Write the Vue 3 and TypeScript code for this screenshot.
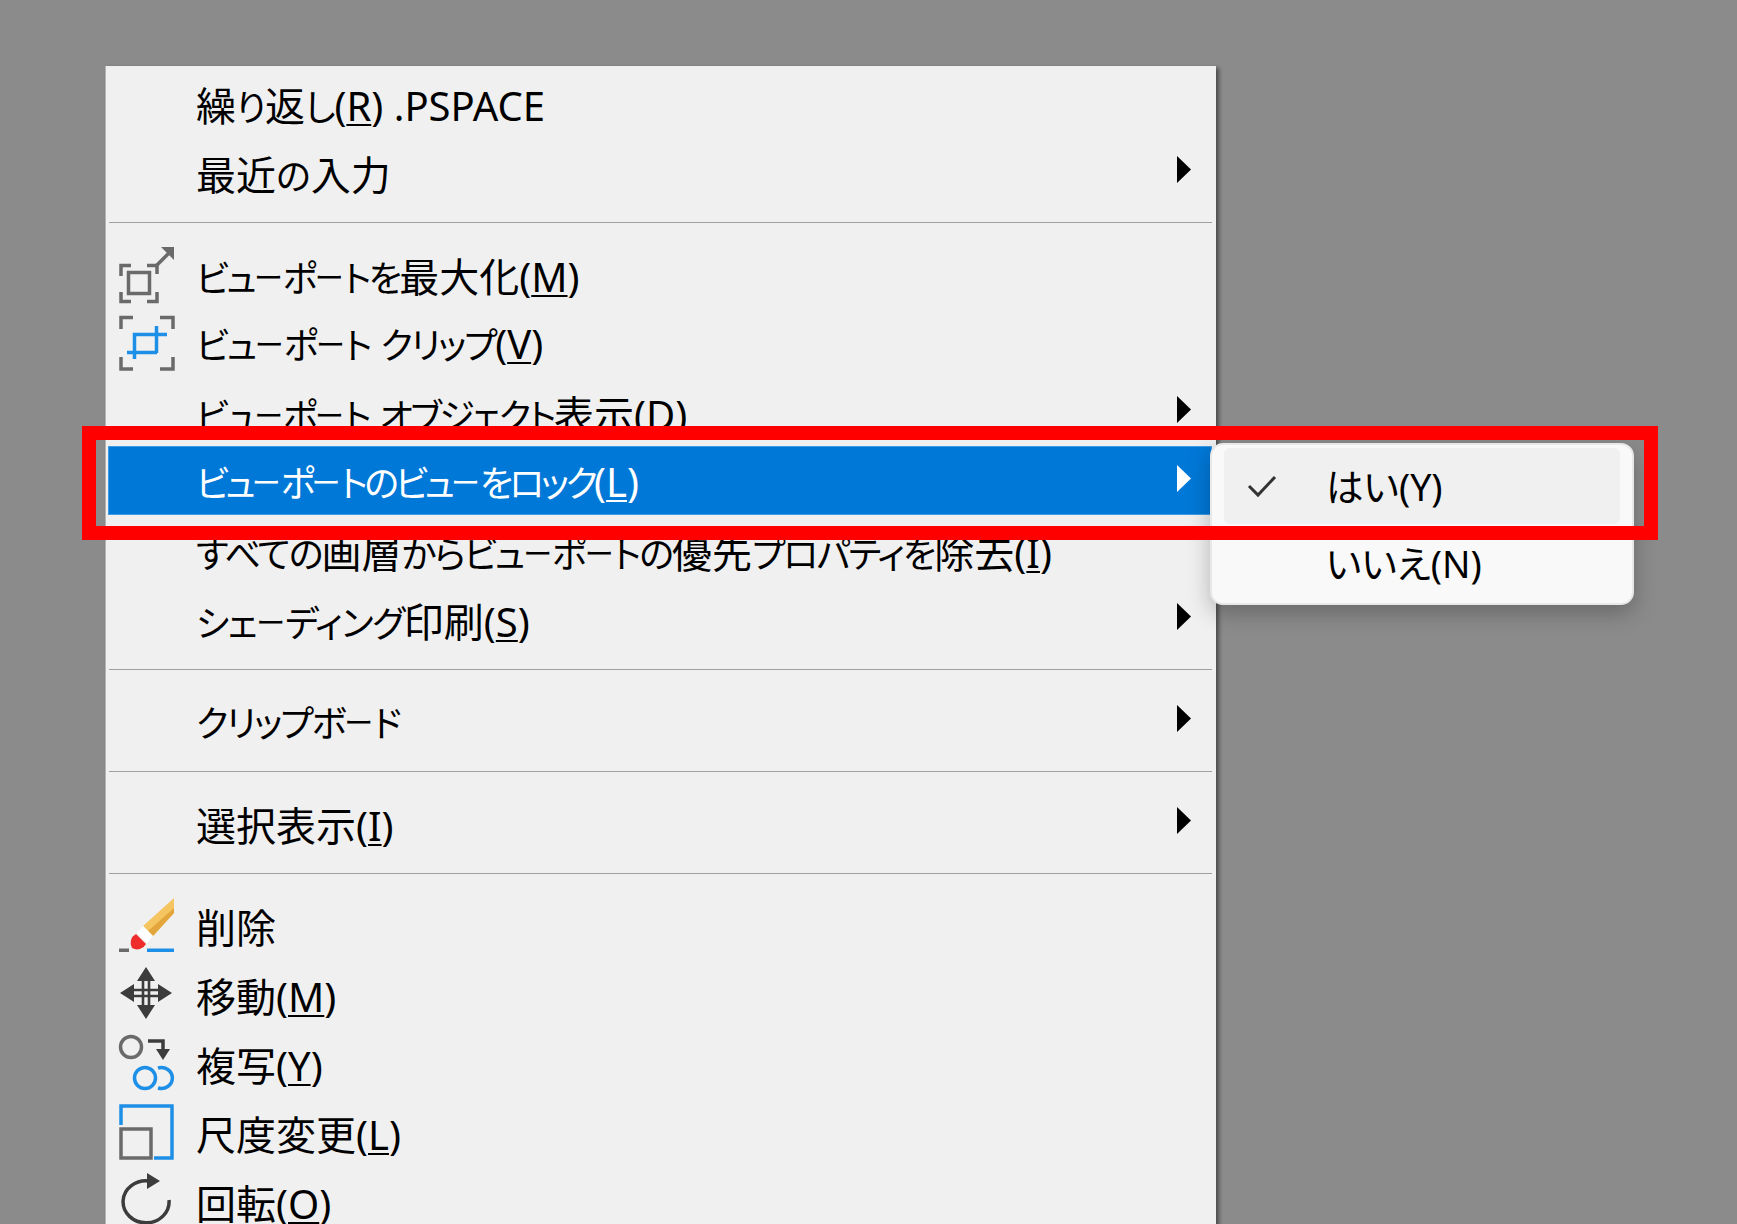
<template>
  <div class="page">
    <div class="menu">
      <template v-for="(group, g) in groups" :key="g">
        <div v-if="g > 0" class="sep"><i></i></div>
        <div
          v-for="row in group"
          :key="row.label"
          class="row"
          :class="{ active: row.active }"
        >
          <span class="icon">
            <svg v-if="row.icon === 'maximize'" viewBox="0 0 56 56" width="56" height="56" fill="none" stroke="#6a6a6a" stroke-width="3.5">
              <path d="M2 30V19.5H12M28 19.5H38V28M2 46V55.5H12M28 55.5H38V46" />
              <rect x="9.5" y="26.5" width="21" height="21" />
              <path d="M37 20L52 5" />
              <path d="M42 1H55V14Z" fill="#6a6a6a" stroke="none" />
            </svg>
            <svg v-else-if="row.icon === 'clip'" viewBox="0 0 56 56" width="56" height="56" fill="none" stroke="#6a6a6a" stroke-width="3.5">
              <path d="M14 2.5H2V14M41 2.5H54V14M2 42V54H14M41 54H54V42" />
              <path d="M15.5 44V19.5H48M8 37.5H38M37.5 11V38" stroke="#1e8fe6" />
            </svg>
            <svg v-else-if="row.icon === 'erase'" viewBox="0 0 56 56" width="56" height="56">
              <path d="M24 29L55 1V16L34 39Z" fill="#f5c562" />
              <path d="M29 34L55 11V16L34 39Z" fill="#e2a63c" />
              <path d="M24 29L34 39L28 46L18 36Z" fill="#fff" />
              <path d="M17 37L27 47A10 10 0 0 1 13 51A10 10 0 0 1 17 37Z" fill="#ee2c2c" />
              <rect x="0" y="51.5" width="10" height="3.5" fill="#6a6a6a" />
              <rect x="28" y="51.5" width="27" height="3.5" fill="#1e8fe6" />
            </svg>
            <svg v-else-if="row.icon === 'move'" viewBox="0 0 56 56" width="56" height="56" fill="#3c3c3c">
              <path d="M27 1L36 15H18ZM27 53L18 39H36ZM1 27L15 18V36ZM53 27L39 36V18Z" />
              <path d="M24 14V40M30 14V40M14 24H40M14 30H40" fill="none" stroke="#3c3c3c" stroke-width="2.6" />
            </svg>
            <svg v-else-if="row.icon === 'copy'" viewBox="0 0 56 56" width="56" height="56" fill="none" stroke-width="3.5">
              <circle cx="12" cy="12" r="10.5" stroke="#6a6a6a" />
              <path d="M29 6H44V15" stroke="#3c3c3c" />
              <path d="M37 14H51L44 25Z" fill="#3c3c3c" />
              <circle cx="26" cy="43" r="10.5" stroke="#1e8fe6" />
              <path d="M39 33A11 10.5 0 1 1 39 53" stroke="#1e8fe6" />
            </svg>
            <svg v-else-if="row.icon === 'scale'" viewBox="0 0 56 56" width="56" height="56" fill="none" stroke-width="3.5">
              <path d="M2 21V2H53V54H35" stroke="#1e8fe6" />
              <rect x="2" y="25" width="30" height="29" stroke="#6a6a6a" />
            </svg>
            <svg v-else-if="row.icon === 'rotate'" viewBox="0 0 56 56" width="56" height="56" fill="none" stroke-width="3.5">
              <path d="M50 27A23 21 0 1 1 30 8" stroke="#3c3c3c" />
              <path d="M28 0L41 8L28 16Z" fill="#3c3c3c" />
            </svg>
          </span>
          <span class="label" :style="{ '--kana-gap': (row.gap ?? -2.5) + 'px' }">
            <span v-for="(run, r) in splitRuns(row.label)" :key="r" :class="run.cls">{{ run.text }}</span><template v-if="row.key">(<u>{{ row.key }}</u>)</template>{{ row.after }}
          </span>
          <svg v-if="row.sub" class="arrow" viewBox="0 0 14 27" width="14" height="27">
            <path d="M0 0L14 13.5L0 27Z" />
          </svg>
        </div>
      </template>
    </div>

    <div class="submenu">
      <div class="subrow hover">
        <svg class="check" viewBox="0 0 30 24" width="30" height="24" fill="none" stroke="#333" stroke-width="3">
          <path d="M2 12L11 21L28 3" />
        </svg>
        <span>はい(Y)</span>
      </div>
      <div class="subrow"><span>いいえ(N)</span></div>
    </div>

    <div class="frame"></div>
  </div>
</template>

<script setup lang="ts">
interface Row {
  label: string;
  key?: string;
  after?: string;
  sub?: boolean;
  active?: boolean;
  icon?: string;
  gap?: number;
}

const groups: Row[][] = [
  [
    { label: '繰り返し', key: 'R', after: ' .PSPACE', gap: -1 },
    { label: '最近の入力', sub: true, gap: 0 },
  ],
  [
    { label: 'ビューポートを最大化', key: 'M', icon: 'maximize', gap: -2.6 },
    { label: 'ビューポート クリップ', key: 'V', icon: 'clip', gap: -2.2 },
    { label: 'ビューポート オブジェクト表示', key: 'D', sub: true, gap: -2.5 },
    { label: 'ビューポートのビューをロック', key: 'L', sub: true, active: true, gap: -3.7 },
    { label: 'すべての画層からビューポートの優先プロパティを除去', key: 'I', gap: -1.9 },
    { label: 'シェーディング印刷', key: 'S', sub: true, gap: -1.2 },
  ],
  [{ label: 'クリップボード', sub: true, gap: -1.9 }],
  [{ label: '選択表示', key: 'I', sub: true }],
  [
    { label: '削除', icon: 'erase' },
    { label: '移動', key: 'M', icon: 'move' },
    { label: '複写', key: 'Y', icon: 'copy' },
    { label: '尺度変更', key: 'L', icon: 'scale' },
    { label: '回転', key: 'O', icon: 'rotate' },
  ],
];

function splitRuns(text: string) {
  const parts = text.match(/ー+|[ぁ-ゖァ-ヺ]+|[^ぁ-ゖァ-ヺー]+/g) ?? [];
  return parts.map((part) => ({
    text: part,
    cls: part[0] === 'ー' ? 'bar' : /[ぁ-ゖァ-ヺ]/.test(part[0]) ? 'kana' : '',
  }));
}
</script>

<style>
html,
body {
  margin: 0;
  overflow: hidden;
}
</style>

<style scoped>
.page {
  position: relative;
  height: 1224px;
  overflow: hidden;
  box-sizing: border-box;
  padding: 66px 0 0 105px;
  background: #8b8b8b;
  font-family: "Noto Sans", "Noto Sans CJK JP", sans-serif;
  font-feature-settings: "palt";
  font-size: 40px;
  color: #000;
}

.menu {
  width: 1111px;
  height: 1300px;
  box-sizing: border-box;
  padding: 2px 4px 0 2px;
  background: #f0f0f0;
  border-left: 1px solid #b5b5b5;
  box-shadow: 3px 2px 4px rgba(0, 0, 0, 0.45);
}

.row {
  display: flex;
  align-items: center;
  height: 69px;
  padding: 0 21px 0 11px;
}

.row.active {
  background: #0078d7;
  color: #fff;
  box-shadow: inset 0 0 0 1px #3f9ae2;
}

.icon {
  display: block;
  flex: none;
  width: 56px;
  height: 56px;
  margin-right: 21px;
}

.icon svg {
  display: block;
  overflow: visible;
}

.label {
  padding-top: 2px;
  white-space: pre;
}

.kana {
  font-size: 36px;
  letter-spacing: var(--kana-gap);
}

.bar {
  font-size: 29px;
  vertical-align: 3px;
}

.label u {
  text-underline-offset: 3px;
  text-decoration-thickness: 2px;
}

.arrow {
  margin-left: auto;
  margin-top: -4px;
  fill: currentColor;
}

.sep {
  display: flex;
  align-items: center;
  height: 33px;
}

.sep i {
  display: block;
  width: 100%;
  margin-left: 1px;
  height: 1px;
  background: #a0a0a0;
}

.submenu {
  position: absolute;
  left: 1210px;
  top: 443px;
  width: 424px;
  height: 162px;
  box-sizing: border-box;
  padding: 3px 12px;
  background: #f9f9f9;
  border: 2px solid #e8e8e8;
  border-radius: 13px;
  box-shadow: 0 8px 22px rgba(0, 0, 0, 0.25);
  font-size: 37.5px;
}

.subrow {
  position: relative;
  display: flex;
  align-items: center;
  box-sizing: border-box;
  height: 76px;
  padding-bottom: 2px;
  padding-left: 102px;
  border-radius: 6px;
}

.subrow.hover {
  padding-bottom: 4px;
  background: #f0f0f0;
}

.check {
  position: absolute;
  left: 23px;
  top: 26px;
}

.frame {
  position: absolute;
  left: 82px;
  top: 426px;
  width: 1576px;
  height: 114px;
  box-sizing: border-box;
  border: 14px solid #f00;
}
</style>
